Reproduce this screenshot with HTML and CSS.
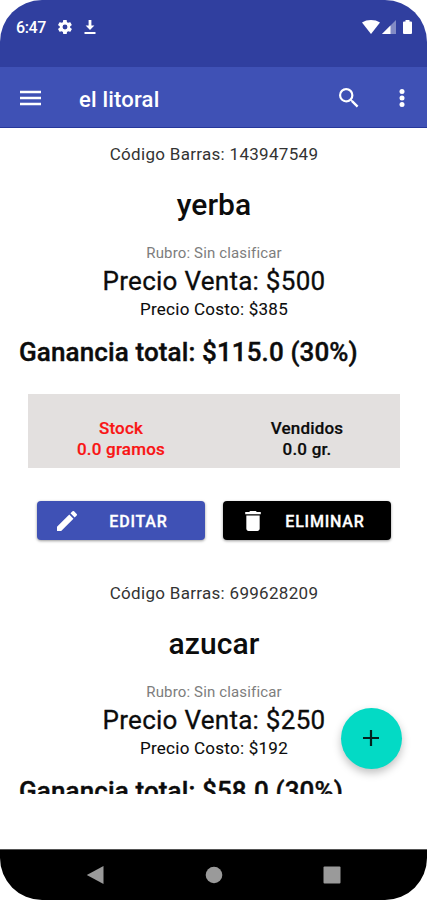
FILE: index.html
```
<!DOCTYPE html>
<html lang="es">
<head>
    <meta charset="UTF-8">
    <meta name="viewport" content="width=device-width, initial-scale=1.0">
    <title>el litoral</title>
    <link rel="stylesheet" href="styles.css">
</head>
<body>
    <div class="screen">
        <!-- Status bar -->
        <div class="status-bar">
            <span class="clock">6:47</span>
            <svg class="icon-gear" viewBox="2 2 20 20" width="14" height="14"><path fill="currentColor" d="M19.400 13a7.500 7.500 0 0 0 0-2l2.100-1.600c.2-.2.3-.5.1-.7l-2-3.400c-.1-.2-.4-.3-.6-.2l-2.500 1a7.300 7.300 0 0 0-1.700-1l-.4-2.600c0-.3-.2-.5-.5-.5h-4c-.3 0-.5.2-.5.5L9 5.100c-.6.2-1.200.6-1.700 1l-2.500-1c-.2-.1-.5 0-.6.2l-2 3.400c-.1.2-.1.5.1.7L4.500 11a7.500 7.500 0 0 0 0 2l-2.200 1.600c-.2.2-.2.5-.1.7l2 3.400c.1.2.4.3.6.2l2.500-1c.5.4 1.100.8 1.700 1l.4 2.600c0 .3.3.5.6.5h4c.3 0 .5-.2.5-.5l.4-2.600c.6-.2 1.200-.6 1.700-1l2.500 1c.2.1.5 0 .6-.2l2-3.400c.1-.2.1-.5-.1-.7L19.400 13zM12 15.500a3.500 3.500 0 1 1 0-7 3.500 3.500 0 0 1 0 7z"/></svg>
            <svg class="icon-download" viewBox="0 0 12 16" width="12" height="16"><path fill="currentColor" d="M4.600 1h2.800v5.500h3L6 11 1.600 6.500h3zM.5 13h11v1.900H.5z"/></svg>
            <div class="status-right">
                <svg viewBox="0 0 18 14" width="18" height="14"><path fill="currentColor" d="M0 2.500C5-.8 13-.8 18 2.500L9 14z"/></svg>
                <svg class="icon-signal" viewBox="0 0 14 14" width="14" height="14"><path fill="currentColor" opacity=".4" d="M14 0v14H0z"/><path fill="currentColor" d="M8.500 5.500V14H0z"/></svg>
                <svg class="icon-battery" viewBox="0 0 9 14" width="9" height="14"><path fill="currentColor" d="M2.500 0h4v1.500H8q1 0 1 1V13q0 1-1 1H1q-1 0-1-1V2.500q0-1 1-1h1.500z"/></svg>
            </div>
        </div>

        <!-- App bar -->
        <header class="app-bar">
            <svg class="menu" viewBox="0 0 21 16" width="21" height="16"><path stroke="currentColor" stroke-width="2.300" d="M0 2h21M0 8h21M0 14h21"/></svg>
            <h1>el litoral</h1>
            <svg class="search" viewBox="3 3 18 18" width="20" height="20"><path fill="currentColor" d="M15.500 14h-.79l-.28-.27A6.471 6.471 0 0 0 16 9.500 6.500 6.500 0 1 0 9.500 16c1.610 0 3.090-.59 4.230-1.570l.27.28v.79l5 4.990L20.490 19l-4.990-5zm-6 0C7.010 14 5 11.990 5 9.500S7.010 5 9.500 5 14 7.010 14 9.500 11.990 14 9.500 14z"/></svg>
            <svg class="more" viewBox="0 0 6 20" width="6" height="20"><g fill="currentColor"><circle cx="3" cy="3.500" r="2.500"/><circle cx="3" cy="10" r="2.500"/><circle cx="3" cy="16.500" r="2.500"/></g></svg>
        </header>

        <!-- Product list -->
        <main class="product-list">
            <section class="product">
                <p class="code">Código Barras: 143947549</p>
                <h2 class="name">yerba</h2>
                <p class="category">Rubro: Sin clasificar</p>
                <p class="price">Precio Venta: $500</p>
                <p class="cost">Precio Costo: $385</p>
                <p class="profit">Ganancia total: $115.0 (30%)</p>
                <div class="stats">
                    <div class="stat empty">Stock<br>0.0 gramos</div>
                    <div class="stat">Vendidos<br>0.0 gr.</div>
                </div>
                <div class="actions">
                    <button class="btn edit">
                        <svg viewBox="3 3 18 18" width="20" height="20"><path fill="currentColor" d="M3 17.250V21h3.750L17.810 9.940l-3.750-3.750L3 17.250zM20.710 7.040a1 1 0 0 0 0-1.410l-2.340-2.340a1 1 0 0 0-1.410 0l-1.830 1.830 3.750 3.750 1.830-1.830z"/></svg>
                        <span>EDITAR</span>
                    </button>
                    <button class="btn delete">
                        <svg viewBox="5 3 14 18" width="16" height="20"><path fill="currentColor" d="M6 19c0 1.100.9 2 2 2h8c1.100 0 2-.9 2-2V7H6v12zM19 4h-3.500l-1-1h-5l-1 1H5v2h14V4z"/></svg>
                        <span>ELIMINAR</span>
                    </button>
                </div>
            </section>

            <section class="product">
                <p class="code">Código Barras: 699628209</p>
                <h2 class="name">azucar</h2>
                <p class="category">Rubro: Sin clasificar</p>
                <p class="price">Precio Venta: $250</p>
                <p class="cost">Precio Costo: $192</p>
                <p class="profit">Ganancia total: $58.0 (30%)</p>
            </section>
        </main>

        <button class="fab" aria-label="Agregar">
            <svg viewBox="0 0 16 16" width="16" height="16"><path stroke="currentColor" stroke-width="2.200" d="M8 0v16M0 8h16"/></svg>
        </button>

        <!-- Navigation bar -->
        <nav class="nav-bar">
            <svg viewBox="0 0 18 20" width="18" height="20"><path fill="currentColor" d="M17.500 1v18L.8 10z"/></svg>
            <svg viewBox="0 0 18 18" width="18" height="18"><circle cx="9" cy="9" r="8.300" fill="currentColor"/></svg>
            <svg viewBox="0 0 18 18" width="18" height="18"><rect x=".5" y=".5" width="17" height="17" rx="1" fill="currentColor"/></svg>
        </nav>
    </div>
</body>
</html>
```
FILE: styles.css
```
:root {
    --primary: #3f51b5;
    --primary-dark: #303f9f;
    --accent: #03dac5;
}

* {
    box-sizing: border-box;
}

body {
    margin: 0;
    background: #fff;
    font-family: Roboto, sans-serif;
    color: #0c0c0c;
}

h1, h2, p {
    margin: 0;
    font-weight: 400;
}

svg {
    display: block;
    flex: none;
}

.screen {
    position: relative;
    display: flex;
    flex-direction: column;
    height: 900px;
    border-radius: 42px;
    overflow: hidden;
    background: #fff;
}

/* Status bar */
.status-bar {
    display: flex;
    align-items: center;
    height: 67px;
    padding: 0 15px 13px 16px;
    background: var(--primary-dark);
    color: #fff;
}

.clock {
    padding-top: 1px;
    font-size: 16px;
    font-weight: 500;
    letter-spacing: -0.4px;
}

.icon-gear {
    margin-left: 12px;
}

.icon-download {
    margin-left: 12px;
}

.status-right {
    display: flex;
    margin-left: auto;
}

.icon-signal {
    margin-left: 2px;
}

.icon-battery {
    margin-left: 7px;
}

/* App bar */
.app-bar {
    display: flex;
    align-items: center;
    height: 61px;
    padding: 1px 22px 0 20px;
    background: var(--primary);
    border-bottom: 1px solid #26379b;
    color: #fff;
}

.app-bar h1 {
    margin-left: 38px;
    padding-top: 3px;
    font-size: 22px;
    font-weight: 500;
    letter-spacing: 0.2px;
}

.search {
    margin-left: auto;
}

.more {
    margin-left: 40px;
}

/* Products */
.product-list {
    height: 666px;
    overflow: hidden;
}

.product {
    height: 439px;
    padding: 13px 0 0 1px;
    text-align: center;
}

.code {
    font-size: 17px;
    line-height: 26px;
    letter-spacing: 0.3px;
    color: #333;
}

.name {
    margin-top: 18px;
    font-size: 30px;
    font-weight: 500;
    line-height: 40px;
    letter-spacing: 0.1px;
}

.category {
    margin-top: 18px;
    font-size: 15px;
    line-height: 20px;
    letter-spacing: 0.15px;
    color: #7d7d7d;
}

.price {
    margin-top: 1px;
    font-size: 26px;
    line-height: 34px;
    letter-spacing: 0.27px;
    -webkit-text-stroke: 0.3px;
}

.cost {
    margin-top: 1px;
    font-size: 17px;
    line-height: 20px;
    letter-spacing: 0.25px;
    -webkit-text-stroke: 0.1px;
}

.profit {
    margin-top: 16px;
    padding-left: 18px;
    font-size: 26px;
    font-weight: 500;
    line-height: 34px;
    letter-spacing: 0.12px;
    text-align: left;
    -webkit-text-stroke: 0.4px;
}

.stats {
    display: grid;
    grid-template-columns: 1fr 1fr;
    height: 74px;
    margin: 25px 27px 0 27px;
    padding-top: 24px;
    background: #e3e0df;
}

.stat {
    font-size: 17px;
    font-weight: 500;
    line-height: 21px;
    letter-spacing: 0.2px;
    -webkit-text-stroke: 0.2px;
}

.stat.empty {
    color: #f91414;
}

.actions {
    display: grid;
    grid-template-columns: 1fr 1fr;
    gap: 18px;
    margin: 33px 36px 0 36px;
}

.btn {
    display: flex;
    align-items: center;
    height: 39px;
    padding: 1px 20px 0;
    border: none;
    border-radius: 4px;
    background: var(--primary);
    box-shadow: 0 1px 3px rgba(0, 0, 0, 0.4);
    color: #fff;
    font-family: inherit;
    font-size: 16px;
    font-weight: 500;
    letter-spacing: 0.8px;
    -webkit-text-stroke: 0.3px;
}

.btn span {
    flex: 1;
}

.edit span {
    padding-left: 15px;
}

.delete {
    background: #000;
    padding: 1px 22px 0;
}

.delete span {
    padding-left: 15px;
    margin-right: -5px;
}

/* Floating action button */
.fab {
    position: absolute;
    right: 25px;
    top: 708px;
    display: flex;
    align-items: center;
    justify-content: center;
    width: 61px;
    height: 61px;
    padding: 0 2px 2px 0;
    border: none;
    border-radius: 50%;
    background: var(--accent);
    box-shadow: 0 4px 8px rgba(0, 0, 0, 0.25);
    color: #04201d;
}

/* Navigation bar */
.nav-bar {
    display: flex;
    align-items: center;
    justify-content: space-between;
    height: 51px;
    margin-top: auto;
    padding: 0 86px;
    background: #000;
    border-top: 1px solid #555;
    color: #9a9a9a;
}
```
